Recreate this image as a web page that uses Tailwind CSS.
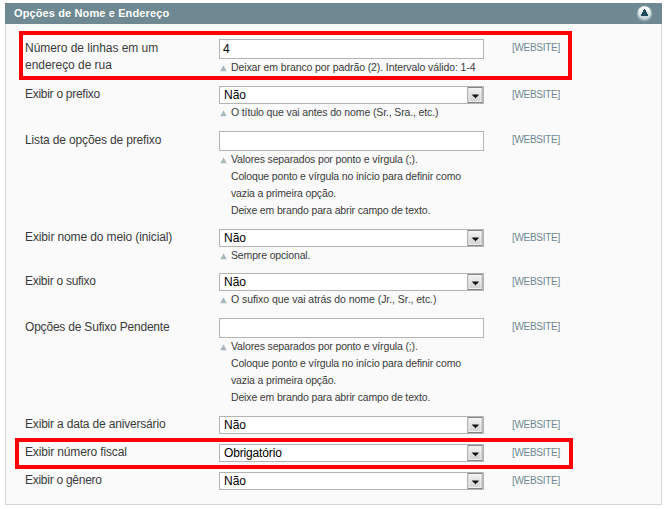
<!DOCTYPE html>
<html lang="pt-BR">
<head>
<meta charset="utf-8">
<title>Opções de Nome e Endereço</title>
<script src="https://cdn.jsdelivr.net/npm/@tailwindcss/browser@4"></script>
</head>
<body class="bg-white h-[509px] overflow-hidden pt-[3px] pl-[5px] font-['Liberation_Sans',Arial,sans-serif] text-[12px] leading-[17px] text-[#3a3a3a]">
<svg class="absolute" width="0" height="0">
  <defs>
    <linearGradient id="btn" x1="0" y1="0" x2="0" y2="1"><stop offset="0" stop-color="#f4f4f4"/><stop offset="1" stop-color="#cfcfcf"/></linearGradient>
    <linearGradient id="ball" x1="0" y1="0" x2="0" y2="1"><stop offset="0" stop-color="#ffffff"/><stop offset="1" stop-color="#bccfd4"/></linearGradient>
    <symbol id="drop" viewBox="0 0 16 17"><rect x=".5" y=".5" width="15" height="16" fill="url(#btn)" stroke="#777"/><rect x="1.5" y="1.5" width="13" height="14" fill="none" stroke="#f4f4f4"/><path d="M5 8h7v1h-1v1h-1v1H9v1H8v-1H7v-1H6V9H5z" fill="#111"/></symbol>
    <symbol id="tri" viewBox="0 0 7 7"><path d="M3.5 .3L6.7 6.3H.3z" fill="#a9b9bd"/></symbol>
  </defs>
</svg>
<main class="w-[657px]">
  <header class="h-[21px] bg-[#6f8992] flex items-center justify-between pl-[9px] pr-[9px] text-white font-bold text-[11px]">
    <h1 class="tracking-[0.12px]">Opções de Nome e Endereço</h1>
    <svg width="17" height="17" viewBox="0 0 17 17"><circle cx="8.5" cy="8.5" r="8" fill="#8fa5ac"/><circle cx="8.5" cy="8" r="6.7" fill="url(#ball)"/><path d="M8 4h1v1h1v2h1v2h1v2H5V9h1V7h1V5h1z" fill="#1f4a5b"/></svg>
  </header>
  <section class="h-[481px] border border-t-0 border-[#d6d6d6] bg-[#fafafa] pl-[19px] pt-[15px]">
    <div class="relative flex h-[47px]">
      <div class="absolute left-[-6px] top-[-8px] w-[553px] h-[49px] border-4 border-[#fe0000]"></div>
      <div class="w-[194px] pt-[1px] tracking-[-0.04px]">Número de linhas em um<br>endereço de rua</div>
      <div class="w-[293px]">
        <div class="w-[265px] h-[20px] border border-[#b4b4b4] bg-white pl-[3px] leading-[19px] text-black">4</div>
        <div class="flex text-[10.5px] tracking-[-0.1px]"><svg class="mt-[6px] ml-[1px] mr-[4px]" width="7" height="7"><use href="#tri"/></svg><p>Deixar em branco por padrão (2). Intervalo válido: 1-4</p></div>
      </div>
      <div class="text-[10px] tracking-[-0.3px] text-[#6f8992]">[WEBSITE]</div>
    </div>
    <div class="flex h-[45px]">
      <div class="w-[194px] tracking-[-0.28px]">Exibir o prefixo</div>
      <div class="w-[293px]">
        <div class="w-[265px] h-[18px] border border-[#b4b4b4] bg-white pl-[4px] leading-[16px] text-black flex justify-between">Não<svg width="16" height="16" preserveAspectRatio="none"><use href="#drop"/></svg></div>
        <div class="flex text-[10.5px] tracking-[-0.13px]"><svg class="mt-[6px] ml-[1px] mr-[4px]" width="7" height="7"><use href="#tri"/></svg><p>O título que vai antes do nome (Sr., Sra., etc.)</p></div>
      </div>
      <div class="text-[10px] tracking-[-0.3px] text-[#6f8992]">[WEBSITE]</div>
    </div>
    <div class="flex h-[98px]">
      <div class="w-[194px] pt-px tracking-[-0.15px]">Lista de opções de prefixo</div>
      <div class="w-[293px]">
        <div class="w-[265px] h-[20px] border border-[#b4b4b4] bg-white"></div>
        <div class="flex text-[10.5px] tracking-[-0.15px]"><svg class="mt-[6px] ml-[1px] mr-[4px]" width="7" height="7"><use href="#tri"/></svg><p>Valores separados por ponto e vírgula (;).<br>Coloque ponto e vírgula no início para definir como<br>vazia a primeira opção.<br>Deixe em brando para abrir campo de texto.</p></div>
      </div>
      <div class="text-[10px] tracking-[-0.3px] text-[#6f8992]">[WEBSITE]</div>
    </div>
    <div class="flex h-[44px]">
      <div class="w-[194px] tracking-[-0.12px]">Exibir nome do meio (inicial)</div>
      <div class="w-[293px]">
        <div class="w-[265px] h-[18px] border border-[#b4b4b4] bg-white pl-[4px] leading-[16px] text-black flex justify-between">Não<svg width="16" height="16"><use href="#drop"/></svg></div>
        <div class="flex text-[10.5px] tracking-[-0.15px]"><svg class="mt-[6px] ml-[1px] mr-[4px]" width="7" height="7"><use href="#tri"/></svg><p>Sempre opcional.</p></div>
      </div>
      <div class="text-[10px] tracking-[-0.3px] text-[#6f8992]">[WEBSITE]</div>
    </div>
    <div class="flex h-[45px]">
      <div class="w-[194px] tracking-[-0.27px]">Exibir o sufixo</div>
      <div class="w-[293px]">
        <div class="w-[265px] h-[18px] border border-[#b4b4b4] bg-white pl-[4px] leading-[16px] text-black flex justify-between">Não<svg width="16" height="16"><use href="#drop"/></svg></div>
        <div class="flex text-[10.5px] tracking-[-0.05px]"><svg class="mt-[6px] ml-[1px] mr-[4px]" width="7" height="7"><use href="#tri"/></svg><p>O sufixo que vai atrás do nome (Jr., Sr., etc.)</p></div>
      </div>
      <div class="text-[10px] tracking-[-0.3px] text-[#6f8992]">[WEBSITE]</div>
    </div>
    <div class="flex h-[98px]">
      <div class="w-[194px] pt-px tracking-[-0.2px]">Opções de Sufixo Pendente</div>
      <div class="w-[293px]">
        <div class="w-[265px] h-[20px] border border-[#b4b4b4] bg-white"></div>
        <div class="flex text-[10.5px] tracking-[-0.15px]"><svg class="mt-[6px] ml-[1px] mr-[4px]" width="7" height="7"><use href="#tri"/></svg><p>Valores separados por ponto e vírgula (;).<br>Coloque ponto e vírgula no início para definir como<br>vazia a primeira opção.<br>Deixe em brando para abrir campo de texto.</p></div>
      </div>
      <div class="text-[10px] tracking-[-0.3px] text-[#6f8992]">[WEBSITE]</div>
    </div>
    <div class="flex h-[28px]">
      <div class="w-[194px] tracking-[-0.18px]">Exibir a data de aniversário</div>
      <div class="w-[293px]">
        <div class="w-[265px] h-[18px] border border-[#b4b4b4] bg-white pl-[4px] leading-[16px] text-black flex justify-between">Não<svg width="16" height="16"><use href="#drop"/></svg></div>
      </div>
      <div class="text-[10px] tracking-[-0.3px] text-[#6f8992]">[WEBSITE]</div>
    </div>
    <div class="relative flex h-[28px]">
      <div class="absolute left-[-10px] top-[-6px] w-[558px] h-[31px] border-4 border-[#fe0000]"></div>
      <div class="w-[194px] tracking-[-0.15px]">Exibir número fiscal</div>
      <div class="w-[293px]">
        <div class="w-[265px] h-[18px] border border-[#b4b4b4] bg-white pl-[4px] leading-[16px] tracking-[-0.15px] text-black flex justify-between">Obrigatório<svg width="16" height="16"><use href="#drop"/></svg></div>
      </div>
      <div class="text-[10px] tracking-[-0.3px] text-[#6f8992]">[WEBSITE]</div>
    </div>
    <div class="flex h-[28px]">
      <div class="w-[194px] tracking-[-0.27px]">Exibir o gênero</div>
      <div class="w-[293px]">
        <div class="w-[265px] h-[18px] border border-[#b4b4b4] bg-white pl-[4px] leading-[16px] text-black flex justify-between">Não<svg width="16" height="16"><use href="#drop"/></svg></div>
      </div>
      <div class="text-[10px] tracking-[-0.3px] text-[#6f8992]">[WEBSITE]</div>
    </div>
  </section>
</main>
</body>
</html>
